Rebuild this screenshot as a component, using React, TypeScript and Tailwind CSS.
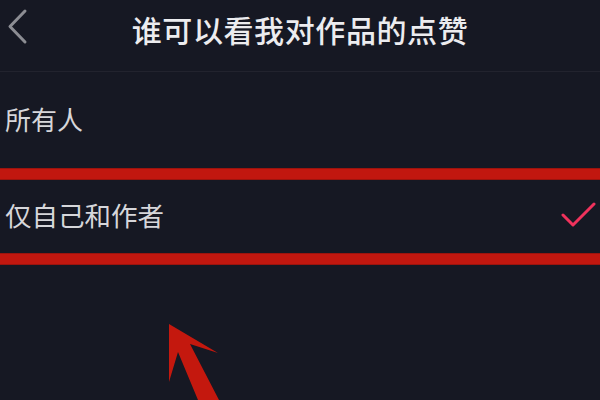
const options = [
    { label: "所有人", checked: false },
    { label: "仅自己和作者", checked: true },
];

export default function App() {
    return (
        <main
            className="relative w-[600px] h-[400px] overflow-hidden bg-[#161823] text-[#e4e4e8]"
            style={{ fontFamily: '"Noto Sans CJK SC", "Noto Sans", sans-serif' }}
        >
            {/* header */}
            <header className="relative h-[72px] flex items-center justify-center border-b border-[#22232e]">
                <svg width="24" height="40" viewBox="0 0 24 40" className="absolute left-[4px] top-[7px]">
                    <path d="M21 4 L6 19.5 L21 35" fill="none" stroke="#8c8d93" strokeWidth="3" strokeLinecap="round" strokeLinejoin="round" />
                </svg>
                <h1 className="text-[30px] font-medium leading-none tracking-[0.6px] -mt-[14px] text-[#ececef]">
                    谁可以看我对作品的点赞
                </h1>
            </header>

            {/* first option */}
            <div className="h-[96px] flex items-center pl-[5px] pb-[2px]">
                <span className="text-[26px] leading-none text-[#d6d6da]">{options[0].label}</span>
            </div>

            {/* annotated option */}
            <div className="h-[12px] bg-[#c1170f] border-y border-[#9b140e]" />
            <div className="h-[73px] flex items-center justify-between pl-[5px] pr-[3px]">
                <span className="text-[26.5px] leading-none text-[#d6d6da] -mt-[3px]">{options[1].label}</span>
                <svg width="36" height="28" viewBox="0 0 36 28" className="-mt-[2px]">
                    <path d="M2 13 L12 23 L33 2" fill="none" stroke="#f0325c" strokeWidth="3" strokeLinecap="round" strokeLinejoin="round" />
                </svg>
            </div>
            <div className="h-[12px] bg-[#c1170f] border-y border-[#9b140e]" />

            {/* annotation arrow */}
            <svg width="70" height="80" viewBox="160 320 70 80" className="absolute left-[160px] top-[320px]">
                <polygon
                    points="169,324 218,353 190,344 219,400 198,400 178,352 169,382"
                    fill="#c4180e"
                />
            </svg>
        </main>
    );
}
